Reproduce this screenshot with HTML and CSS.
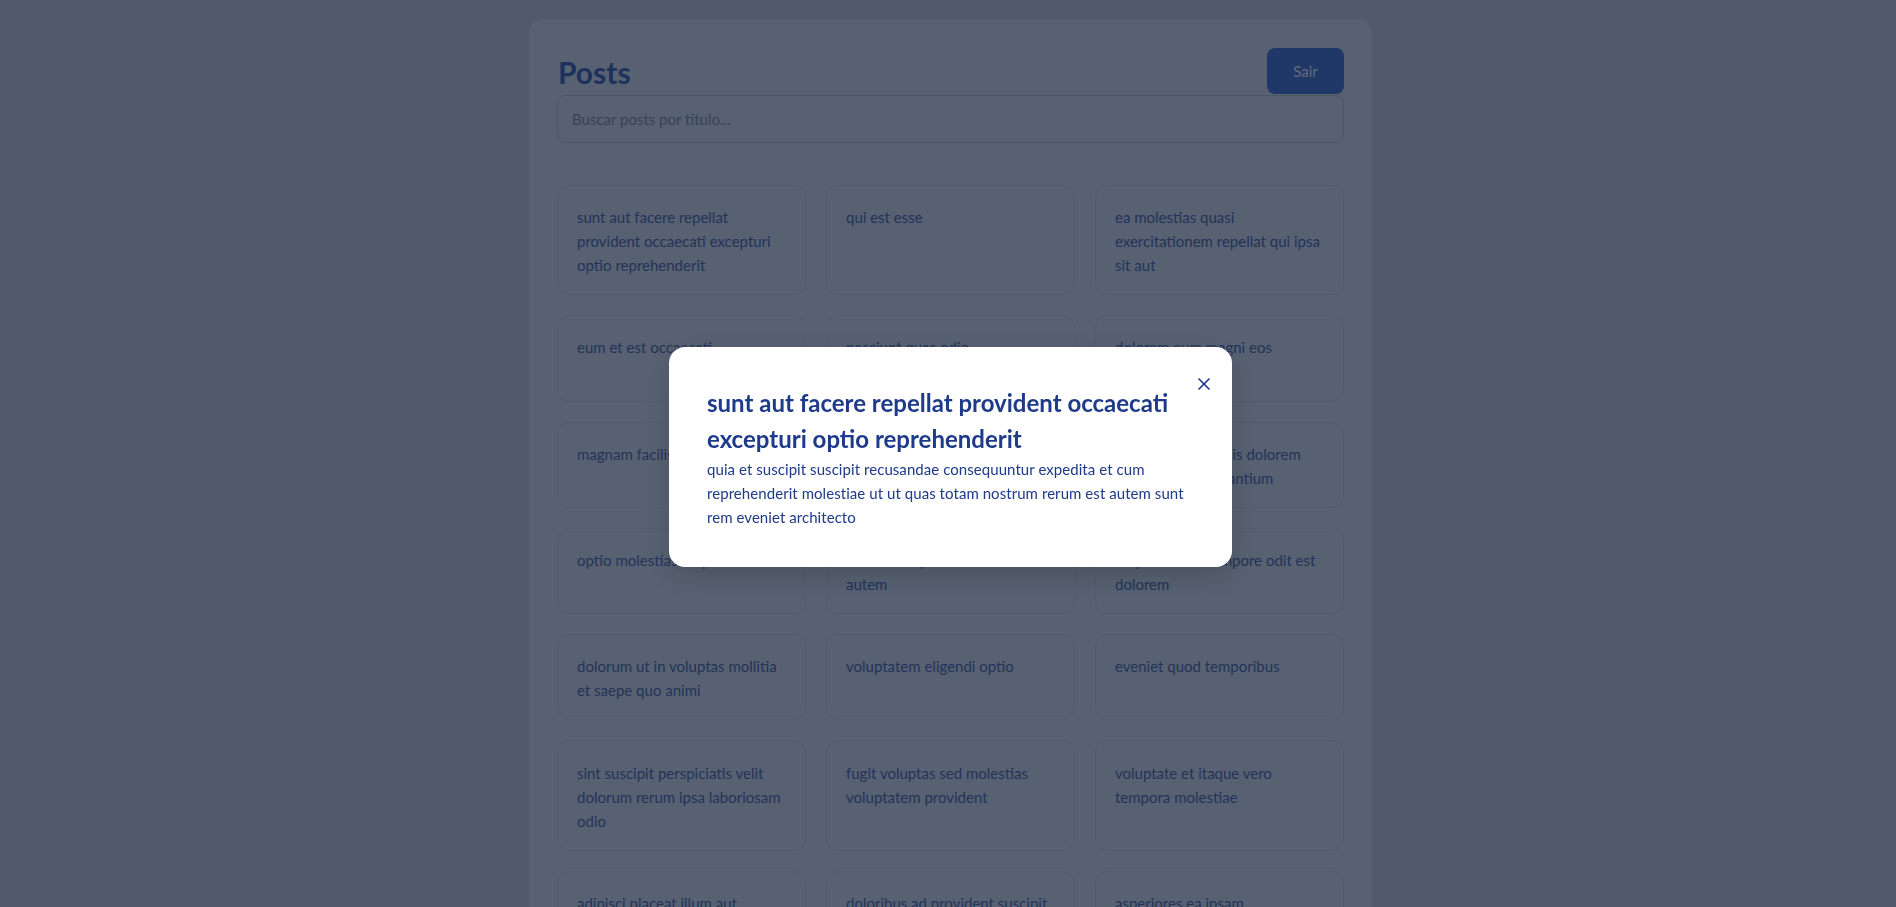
FILE: index.html
```html
<!DOCTYPE html>
<html lang="pt-BR">
<head>
<meta charset="utf-8">
<title>Posts</title>
<link rel="stylesheet" href="styles.css">
</head>
<body>
<div class="page">
  <main class="panel">
    <header class="panel-head">
      <h1 class="panel-title">Posts</h1>
      <button class="logout" type="button">Sair</button>
    </header>
    <input class="search" type="text" placeholder="Buscar posts por título...">
    <ul class="grid">
      <li class="card">sunt aut facere repellat provident occaecati excepturi optio reprehenderit</li>
      <li class="card">qui est esse</li>
      <li class="card">ea molestias quasi exercitationem repellat qui ipsa sit aut</li>
      <li class="card">eum et est occaecati</li>
      <li class="card">nesciunt quas odio</li>
      <li class="card">dolorem eum magni eos aperiam quia</li>
      <li class="card">magnam facilis autem</li>
      <li class="card">dolorem dolore est ipsam</li>
      <li class="card">nesciunt iure omnis dolorem tempora et accusantium</li>
      <li class="card">optio molestias id quia eum</li>
      <li class="card">et ea vero quia laudantium autem</li>
      <li class="card">in quibusdam tempore odit est dolorem</li>
      <li class="card">dolorum ut in voluptas mollitia et saepe quo animi</li>
      <li class="card">voluptatem eligendi optio</li>
      <li class="card">eveniet quod temporibus</li>
      <li class="card">sint suscipit perspiciatis velit dolorum rerum ipsa laboriosam odio</li>
      <li class="card">fugit voluptas sed molestias voluptatem provident</li>
      <li class="card">voluptate et itaque vero tempora molestiae</li>
      <li class="card">adipisci placeat illum aut reiciendis qui</li>
      <li class="card">doloribus ad provident suscipit at</li>
      <li class="card">asperiores ea ipsam voluptatibus modi minima quia sint</li>
      <li class="card">dolor sint quo a velit explicabo quia nam</li>
      <li class="card">maxime id vitae nihil numquam</li>
      <li class="card">autem hic labore sunt dolores incidunt</li>
    </ul>
  </main>
</div>

<div class="overlay">
  <div class="modal" role="dialog" aria-modal="true">
    <button class="close" type="button" aria-label="Fechar">
      <svg viewBox="0 0 24 24" width="20" height="20" fill="none" stroke="currentColor" stroke-width="2" stroke-linecap="round" stroke-linejoin="round"><path d="M18 6 6 18"/><path d="m6 6 12 12"/></svg>
    </button>
    <h2 class="modal-title">sunt aut facere repellat provident occaecati excepturi optio reprehenderit</h2>
    <p class="modal-body">quia et suscipit suscipit recusandae consequuntur expedita et cum reprehenderit molestiae ut ut quas totam nostrum rerum est autem sunt rem eveniet architecto</p>
  </div>
</div>
</body>
</html>
```

FILE: styles.css
```css
* {
  box-sizing: border-box;
}

html, body {
  margin: 0;
  padding: 0;
}

body {
  background: #bccad7;
  font-family: Lato, "Liberation Sans", sans-serif;
  font-size: 15px;
  line-height: 24px;
  color: #4c67aa;
}

.page {
  padding: 19px 0 40px 5px;
}

.panel {
  width: 843px;
  margin: 0 auto;
  background: #cfdce7;
  border: 1px solid #cad7e2;
  border-radius: 12px;
  padding: 28px 27px 27px;
}

.panel-head {
  display: flex;
  align-items: center;
  justify-content: space-between;
  height: 46px;
}

.panel-title {
  margin: 2px 0 0 1px;
  font-size: 30px;
  line-height: 36px;
  font-weight: 700;
  color: #3660b0;
}

.logout {
  height: 46px;
  width: 77px;
  padding: 0;
  border: none;
  border-radius: 8px;
  background: #3f6fcf;
  color: #f1f4f8;
  font-family: inherit;
  font-size: 15px;
}

.search {
  display: block;
  width: 100%;
  height: 48px;
  margin: 1px 0 42px;
  padding: 0 14px;
  border: 1px solid #b0bfcc;
  border-radius: 8px;
  background: #cfdce7;
  font-family: inherit;
  font-size: 15px;
  color: #333;
}

.search::placeholder {
  color: #808b97;
}

.grid {
  list-style: none;
  margin: 0;
  padding: 0;
  display: grid;
  grid-template-columns: repeat(3, 1fr);
  gap: 20px;
}

.card {
  padding: 19.2px 18px 17.1px 19px;
  border: 1px solid #c3d0dc;
  border-radius: 12px;
  background: #cfdce7;
  color: #4a64a8;
}

.overlay {
  position: fixed;
  inset: 0;
  background: rgba(15, 23, 42, 0.625);
  display: flex;
  align-items: center;
  justify-content: center;
  padding: 6px 0 0 5px;
}

.modal {
  position: relative;
  width: 563px;
  padding: 38px;
  background: #ffffff;
  border-radius: 16px;
  box-shadow: 0 10px 25px rgba(0, 0, 0, 0.15);
}

.close {
  position: absolute;
  top: 27px;
  right: 18px;
  width: 20px;
  height: 20px;
  padding: 0;
  border: none;
  background: none;
  color: #1e3a8a;
  display: flex;
}

.modal-title {
  margin: 0;
  font-size: 24px;
  line-height: 36px;
  font-weight: 700;
  color: #1e3a8a;
}

.modal-body {
  margin: 0;
  font-size: 15px;
  letter-spacing: 0.06px;
  color: #1e3a8a;
}
```
